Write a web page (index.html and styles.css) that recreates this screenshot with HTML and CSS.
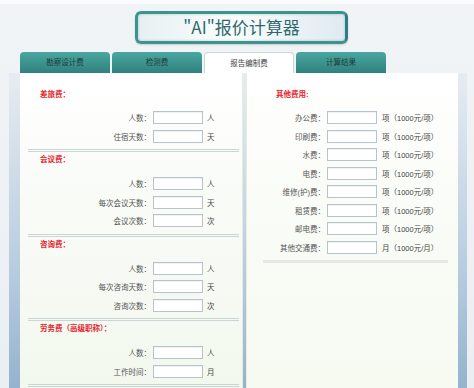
FILE: index.html
```html
<!DOCTYPE html>
<html lang="zh-CN">

<head>
    <meta charset="UTF-8">
    <meta name="viewport" content="width=device-width, initial-scale=1.0">
    <title>"AI"报价计算器</title>
    <link rel="stylesheet" href="styles.css">
</head>

<body>
    <div class="title-box">"AI"报价计算器</div>

    <ul class="tabs">
        <li class="tab">勘察设计费</li>
        <li class="tab">检测费</li>
        <li class="tab active">报告编制费</li>
        <li class="tab">计算结果</li>
    </ul>

    <div class="panel">
        <div class="panel-body">
            <div class="col col-left">
                <div class="group">
                    <h3 class="group-title">差旅费：</h3>
                    <div class="row"><label>人数：</label><input type="text"><span class="unit">人</span></div>
                    <div class="row"><label>住宿天数：</label><input type="text"><span class="unit">天</span></div>
                </div>
                <div class="group">
                    <h3 class="group-title">会议费：</h3>
                    <div class="row"><label>人数：</label><input type="text"><span class="unit">人</span></div>
                    <div class="row"><label>每次会议天数：</label><input type="text"><span class="unit">天</span></div>
                    <div class="row"><label>会议次数：</label><input type="text"><span class="unit">次</span></div>
                </div>
                <div class="group">
                    <h3 class="group-title">咨询费：</h3>
                    <div class="row"><label>人数：</label><input type="text"><span class="unit">人</span></div>
                    <div class="row"><label>每次咨询天数：</label><input type="text"><span class="unit">天</span></div>
                    <div class="row"><label>咨询次数：</label><input type="text"><span class="unit">次</span></div>
                </div>
                <div class="group">
                    <h3 class="group-title">劳务费（高级职称）：</h3>
                    <div class="row"><label>人数：</label><input type="text"><span class="unit">人</span></div>
                    <div class="row"><label>工作时间：</label><input type="text"><span class="unit">月</span></div>
                </div>
            </div>

            <div class="col col-right">
                <div class="group">
                    <h3 class="group-title">其他费用:</h3>
                    <div class="row"><label>办公费：</label><input type="text"><span class="unit">项（1000元/项）</span></div>
                    <div class="row"><label>印刷费：</label><input type="text"><span class="unit">项（1000元/项）</span></div>
                    <div class="row"><label>水费：</label><input type="text"><span class="unit">项（1000元/项）</span></div>
                    <div class="row"><label>电费：</label><input type="text"><span class="unit">项（1000元/项）</span></div>
                    <div class="row"><label>维修(护)费：</label><input type="text"><span class="unit">项（1000元/项）</span></div>
                    <div class="row"><label>租赁费：</label><input type="text"><span class="unit">项（1000元/项）</span></div>
                    <div class="row"><label>邮电费：</label><input type="text"><span class="unit">项（1000元/项）</span></div>
                    <div class="row"><label>其他交通费：</label><input type="text"><span class="unit">月（1000元/月）</span></div>
                </div>
            </div>
        </div>
    </div>
</body>

</html>
```

FILE: styles.css
```css
* {
    margin: 0;
    padding: 0;
    box-sizing: border-box;
}

body {
    overflow: hidden;
    height: 388px;
    background: linear-gradient(to bottom, #f1f4f7, #eaeff3);
    border-top: 4px solid #fbfcfd;
    font-family: "Liberation Sans", "Noto Sans CJK SC", sans-serif;
    color: #555;
}

.title-box {
    width: 213px;
    height: 33px;
    margin: 7px 0 0 135px;
    border: 3px solid #3a958f;
    border-right-color: #2c7e84;
    border-radius: 6px;
    background: linear-gradient(to right, #e6f0f2, #fbfdfd 45%, #dfeaf1);
    box-shadow: inset 0 0 3px rgba(0, 0, 0, 0.2), 0 1px 2px rgba(0, 0, 0, 0.15);
    text-align: center;
    font-family: "Noto Sans CJK SC", sans-serif;
    font-size: 17px;
    line-height: 26px;
    color: #2e6a6c;
}

.tabs {
    display: flex;
    gap: 2px;
    margin-top: 8px;
    padding-left: 20px;
    list-style: none;
}

.tab {
    width: 90px;
    height: 21px;
    border-radius: 4px 4px 0 0;
    background: linear-gradient(to bottom, #4aa7a0, #2f817d);
    text-align: center;
    font-size: 7.5px;
    line-height: 21px;
    color: #1d3b39;
}

.tab.active {
    background: #fff;
    border: 1px solid #c6d8d7;
    border-bottom: none;
    color: #444;
}

.panel {
    width: 458px;
    margin-left: 9px;
    padding: 0 9px 0 11px;
    background: linear-gradient(to bottom, #e6ecf1, #b9cde0 60%, #93b2cd);
}

.panel-body {
    display: flex;
    height: 320px;
}

.col {
    padding-top: 14px;
    background: linear-gradient(to bottom, #ffffff, #f9fbf7 40%, #f2f8ee);
}

.col-left {
    width: 223px;
    border-right: 1px solid #e4ecdc;
}

.col-right {
    flex: 1;
    margin-left: 3px;
    border-left: 1px solid #e6eddc;
    background: linear-gradient(to bottom, #ffffff, #fafcf7 40%, #f6faf1);
}

.group {
    padding: 2px 0 6.5px;
}

.col-left .group {
    margin: 0 3px 0 8px;
    border-bottom: 3px double #c8d7d5;
}

.col-right .group {
    margin: 0 10px 0 16px;
    border-bottom: 3px solid #e2e9e6;
}

.group-title {
    margin-bottom: 11px;
    padding-left: 12px;
    font-size: 7.5px;
    line-height: 12px;
    font-weight: bold;
    color: #e5222b;
}

.col-left .group:first-child .group-title {
    margin-bottom: 10px;
}

.col-right .group-title {
    padding-left: 13px;
    margin-bottom: 10px;
}

.row {
    display: flex;
    align-items: center;
    height: 13px;
    font-size: 7.5px;
}

.row + .row {
    margin-top: 5.5px;
}

.row label {
    width: 123px;
    margin-right: 2px;
    text-align: right;
}

.col-right .row label {
    width: 62px;
}

.row input {
    width: 50px;
    height: 13px;
    border: 1px solid #b6c3cd;
    background: #fff;
    box-shadow: inset 0 1px 1px rgba(0, 0, 0, 0.06);
}

.unit {
    margin-left: 4px;
    color: #444;
}

.col-right .unit {
    margin-left: 5px;
}
```
